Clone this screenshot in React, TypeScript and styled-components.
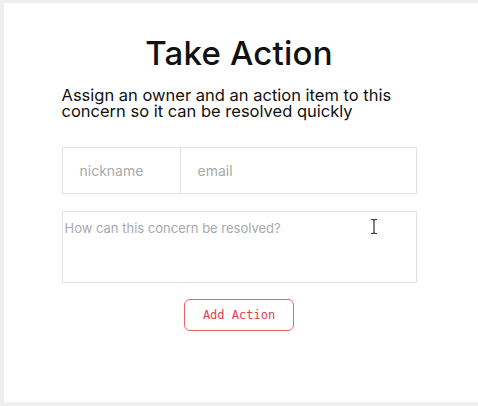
import styled, { createGlobalStyle } from "styled-components";

const GlobalStyle = createGlobalStyle`
  html, body {
    margin: 0;
    padding: 0;
    background: #efefef;
  }
  * {
    box-sizing: border-box;
  }
`;

const Page = styled.div`
  width: 478px;
  height: 406px;
  padding: 3px 0 4px 4px;
`;

const Card = styled.div`
  position: relative;
  width: 100%;
  height: 100%;
  background: #ffffff;
  display: flex;
  flex-direction: column;
  align-items: center;
  padding-top: 30px;
  padding-right: 4px;
  font-family: Inter, "Noto Sans", sans-serif;
`;

const Content = styled.div`
  width: 355px;
  display: flex;
  flex-direction: column;
`;

const Title = styled.h1`
  margin: 0;
  text-align: center;
  font-size: 33px;
  font-weight: 500;
  line-height: 40px;
  color: #111;
  letter-spacing: 0.2px;
`;

const Subtitle = styled.p`
  margin: 14px 0 0;
  font-size: 16.5px;
  line-height: 16px;
  color: #111;
`;

const InputRow = styled.div`
  display: flex;
  margin-top: 28px;
  height: 47px;
  border: 1px solid #e2e2e2;
`;

const Field = styled.input<{ $width?: number }>`
  border: none;
  outline: none;
  height: 100%;
  padding: 0 0 0 17px;
  font-family: Inter, "Noto Sans", sans-serif;
  font-size: 14px;
  color: #333;
  background: transparent;
  ${(p) => (p.$width ? `width: ${p.$width}px; flex: none;` : "flex: 1; min-width: 0;")}
  & + & {
    border-left: 1px solid #e2e2e2;
  }
  &::placeholder {
    color: #a9a9a9;
  }
`;

const Area = styled.textarea`
  margin-top: 17px;
  height: 72px;
  resize: none;
  border: 1px solid #e2e2e2;
  outline: none;
  padding: 8px 2px;
  font-family: Inter, "Noto Sans", sans-serif;
  font-size: 13px;
  color: #333;
  &::placeholder {
    color: #a9a9a9;
  }
`;

const ButtonRow = styled.div`
  display: flex;
  justify-content: center;
  margin-top: 16px;
`;

const Button = styled.button`
  width: 110px;
  height: 32px;
  background: #fff;
  border: 1px solid #e8626a;
  border-radius: 6px;
  color: #e0404a;
  font-family: "DejaVu Sans Mono", "Liberation Mono", monospace;
  font-size: 12px;
  cursor: pointer;
`;

const Cursor = styled.svg`
  position: absolute;
  left: 366px;
  top: 215px;
`;

export default function App() {
  return (
    <>
      <GlobalStyle />
      <Page>
        <Card>
          <Content>
            <Title>Take Action</Title>
            <Subtitle>
              Assign an owner and an action item to this concern so it can be
              resolved quickly
            </Subtitle>
            <InputRow>
              <Field $width={117} placeholder="nickname" />
              <Field placeholder="email" />
            </InputRow>
            <Area placeholder="How can this concern be resolved?" />
            <ButtonRow>
              <Button>Add Action</Button>
            </ButtonRow>
          </Content>
          <Cursor width="8" height="17" viewBox="0 0 8 17">
            <path
              d="M1 1.5h2l1 1 1-1h2M4 2.5v12M1 15.5h2l1-1 1 1h2"
              fill="none"
              stroke="#333"
              strokeWidth="1.2"
            />
          </Cursor>
        </Card>
      </Page>
    </>
  );
}
